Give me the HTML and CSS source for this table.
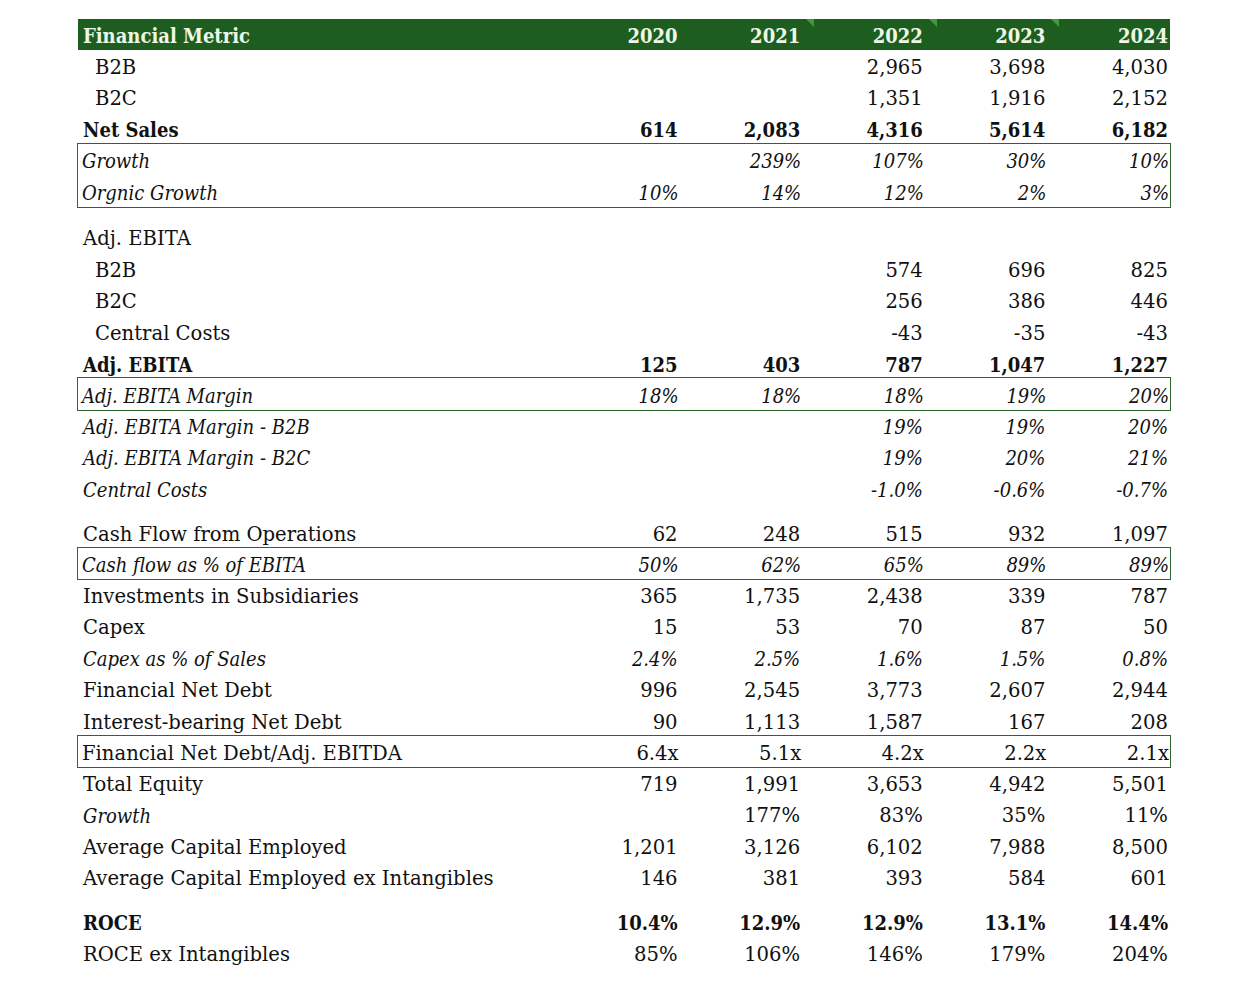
FILE: index.html
```html
<!DOCTYPE html>
<html>
<head>
<meta charset="utf-8">
<link rel="stylesheet" href="styles.css">
</head>
<body>
<div class="sheet">
  <div class="row head">
    <div class="lbl">Financial Metric</div>
    <div class="num">2020</div>
    <div class="num"><span>2021</span><i class="flag"></i></div>
    <div class="num"><span>2022</span><i class="flag"></i></div>
    <div class="num"><span>2023</span><i class="flag"></i></div>
    <div class="num">2024</div>
  </div>
  <div class="row ind"><div class="lbl">B2B</div><div class="num"></div><div class="num"></div><div class="num">2,965</div><div class="num">3,698</div><div class="num">4,030</div></div>
  <div class="row ind"><div class="lbl">B2C</div><div class="num"></div><div class="num"></div><div class="num">1,351</div><div class="num">1,916</div><div class="num">2,152</div></div>
  <div class="row bold"><div class="lbl">Net Sales</div><div class="num">614</div><div class="num">2,083</div><div class="num">4,316</div><div class="num">5,614</div><div class="num">6,182</div></div>
  <div class="box">
    <div class="row ital"><div class="lbl">Growth</div><div class="num"></div><div class="num">239%</div><div class="num">107%</div><div class="num">30%</div><div class="num">10%</div></div>
    <div class="row ital"><div class="lbl">Orgnic Growth</div><div class="num">10%</div><div class="num">14%</div><div class="num">12%</div><div class="num">2%</div><div class="num">3%</div></div>
  </div>
  <div class="spacer wide"></div>
  <div class="row"><div class="lbl">Adj. EBITA</div><div class="num"></div><div class="num"></div><div class="num"></div><div class="num"></div><div class="num"></div></div>
  <div class="row ind"><div class="lbl">B2B</div><div class="num"></div><div class="num"></div><div class="num">574</div><div class="num">696</div><div class="num">825</div></div>
  <div class="row ind"><div class="lbl">B2C</div><div class="num"></div><div class="num"></div><div class="num">256</div><div class="num">386</div><div class="num">446</div></div>
  <div class="row ind"><div class="lbl">Central Costs</div><div class="num"></div><div class="num"></div><div class="num">-43</div><div class="num">-35</div><div class="num">-43</div></div>
  <div class="row bold"><div class="lbl">Adj. EBITA</div><div class="num">125</div><div class="num">403</div><div class="num">787</div><div class="num">1,047</div><div class="num">1,227</div></div>
  <div class="box">
    <div class="row ital"><div class="lbl">Adj. EBITA Margin</div><div class="num">18%</div><div class="num">18%</div><div class="num">18%</div><div class="num">19%</div><div class="num">20%</div></div>
  </div>
  <div class="row ital"><div class="lbl">Adj. EBITA Margin - B2B</div><div class="num"></div><div class="num"></div><div class="num">19%</div><div class="num">19%</div><div class="num">20%</div></div>
  <div class="row ital"><div class="lbl">Adj. EBITA Margin - B2C</div><div class="num"></div><div class="num"></div><div class="num">19%</div><div class="num">20%</div><div class="num">21%</div></div>
  <div class="row ital"><div class="lbl">Central Costs</div><div class="num"></div><div class="num"></div><div class="num">-1.0%</div><div class="num">-0.6%</div><div class="num">-0.7%</div></div>
  <div class="spacer"></div>
  <div class="row"><div class="lbl">Cash Flow from Operations</div><div class="num">62</div><div class="num">248</div><div class="num">515</div><div class="num">932</div><div class="num">1,097</div></div>
  <div class="box">
    <div class="row ital"><div class="lbl">Cash flow as % of EBITA</div><div class="num">50%</div><div class="num">62%</div><div class="num">65%</div><div class="num">89%</div><div class="num">89%</div></div>
  </div>
  <div class="row"><div class="lbl">Investments in Subsidiaries</div><div class="num">365</div><div class="num">1,735</div><div class="num">2,438</div><div class="num">339</div><div class="num">787</div></div>
  <div class="row"><div class="lbl">Capex</div><div class="num">15</div><div class="num">53</div><div class="num">70</div><div class="num">87</div><div class="num">50</div></div>
  <div class="row ital"><div class="lbl">Capex as % of Sales</div><div class="num">2.4%</div><div class="num">2.5%</div><div class="num">1.6%</div><div class="num">1.5%</div><div class="num">0.8%</div></div>
  <div class="row"><div class="lbl">Financial Net Debt</div><div class="num">996</div><div class="num">2,545</div><div class="num">3,773</div><div class="num">2,607</div><div class="num">2,944</div></div>
  <div class="row"><div class="lbl">Interest-bearing Net Debt</div><div class="num">90</div><div class="num">1,113</div><div class="num">1,587</div><div class="num">167</div><div class="num">208</div></div>
  <div class="box">
    <div class="row"><div class="lbl">Financial Net Debt/Adj. EBITDA</div><div class="num">6.4x</div><div class="num">5.1x</div><div class="num">4.2x</div><div class="num">2.2x</div><div class="num">2.1x</div></div>
  </div>
  <div class="row"><div class="lbl">Total Equity</div><div class="num">719</div><div class="num">1,991</div><div class="num">3,653</div><div class="num">4,942</div><div class="num">5,501</div></div>
  <div class="row"><div class="lbl it">Growth</div><div class="num"></div><div class="num">177%</div><div class="num">83%</div><div class="num">35%</div><div class="num">11%</div></div>
  <div class="row"><div class="lbl">Average Capital Employed</div><div class="num">1,201</div><div class="num">3,126</div><div class="num">6,102</div><div class="num">7,988</div><div class="num">8,500</div></div>
  <div class="row"><div class="lbl">Average Capital Employed ex Intangibles</div><div class="num">146</div><div class="num">381</div><div class="num">393</div><div class="num">584</div><div class="num">601</div></div>
  <div class="spacer"></div>
  <div class="row bold"><div class="lbl">ROCE</div><div class="num">10.4%</div><div class="num">12.9%</div><div class="num">12.9%</div><div class="num">13.1%</div><div class="num">14.4%</div></div>
  <div class="row"><div class="lbl">ROCE ex Intangibles</div><div class="num">85%</div><div class="num">106%</div><div class="num">146%</div><div class="num">179%</div><div class="num">204%</div></div>
</div>
</body>
</html>
```
FILE: styles.css
```css
html, body {
  margin: 0;
  padding: 0;
  background: #ffffff;
}
body {
  font-family: "DejaVu Serif", "Liberation Serif", serif;
  font-size: 19.6px;
  color: #111111;
}
.sheet {
  width: 1092px;
  margin: 19px 0 0 78px;
}
.row {
  display: grid;
  grid-template-columns: 479px repeat(5, 1fr);
  height: 31.5px;
  align-items: center;
  white-space: nowrap;
  padding-top: 3px;
  box-sizing: border-box;
}
.lbl {
  padding-left: 5px;
}
.num {
  text-align: right;
  padding-right: 2px;
  position: relative;
  height: 100%;
  display: flex;
  align-items: center;
  justify-content: flex-end;
}
.ind .lbl {
  padding-left: 17px;
}
.bold,
.ital,
.it,
.head {
  font-family: "DejaVu Serif Condensed", "DejaVu Serif", serif;
  font-size: 20px;
}
.bold {
  font-weight: bold;
}
.ital,
.it {
  font-style: italic;
}
.head {
  background: #1d5e20;
  color: #eef7e6;
  font-weight: bold;
  height: 31px;
  padding-top: 2px;
}
.flag {
  position: absolute;
  top: -2px;
  right: -12px;
  width: 0;
  height: 0;
  border-top: 8px solid #3f9a3f;
  border-left: 8px solid transparent;
}
.box {
  border: 1.5px solid #2a672c;
  margin: -1.5px -1px;
}
.box .lbl {
  padding-left: 4px;
}
.box .num {
  padding-right: 1px;
}
.spacer {
  height: 13px;
}
.spacer.wide {
  height: 14.8px;
}
```
